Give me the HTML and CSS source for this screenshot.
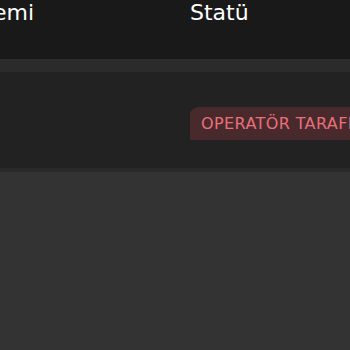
FILE: index.html
```html
<!DOCTYPE html>
<html lang="tr">
<head>
<meta charset="utf-8">
<link rel="stylesheet" href="styles.css">
</head>
<body>
<div class="table">
  <div class="head">
    <div class="col col-method">Ödeme Yöntemi</div>
    <div class="col col-status">Statü</div>
  </div>
  <div class="stripe"></div>
  <div class="row">
    <div class="col col-method"></div>
    <div class="col col-status">
      <span class="badge">Operatör tarafından iptal edildi</span>
    </div>
  </div>
  <div class="row-border"></div>
  <div class="rest"></div>
</div>
</body>
</html>
```
FILE: styles.css
```css
html, body {
  margin: 0;
  padding: 0;
  background: #333333;
  overflow: hidden;
}
.table {
  width: 600px;
  margin-left: -158px;
  font-family: "DejaVu Sans", Verdana, sans-serif;
}
.head,
.row {
  display: grid;
  grid-template-columns: 348px 1fr;
}
.col {
  white-space: nowrap;
  overflow: hidden;
}
.col-method {
  text-align: right;
  padding-right: 156px;
}
.head {
  height: 59px;
  background: #191919;
  color: #ffffff;
  font-size: 22px;
  line-height: 26px;
}
.stripe {
  height: 13px;
  background: #2b2b2b;
}
.row {
  height: 96px;
  background: #222222;
  align-items: start;
}
.row .col-status {
  padding-top: 35px;
}
.badge {
  display: inline-block;
  margin-left: -1px;
  padding: 0 12px;
  height: 33px;
  line-height: 33px;
  background: #48292c;
  color: #e8707a;
  font-size: 16px;
  text-transform: uppercase;
  letter-spacing: 0.4px;
  border-radius: 10px 0 0 0;
}
.row-border {
  height: 4px;
  background: #2a2a2a;
}
.rest {
  height: 200px;
  background: #333333;
}
```
